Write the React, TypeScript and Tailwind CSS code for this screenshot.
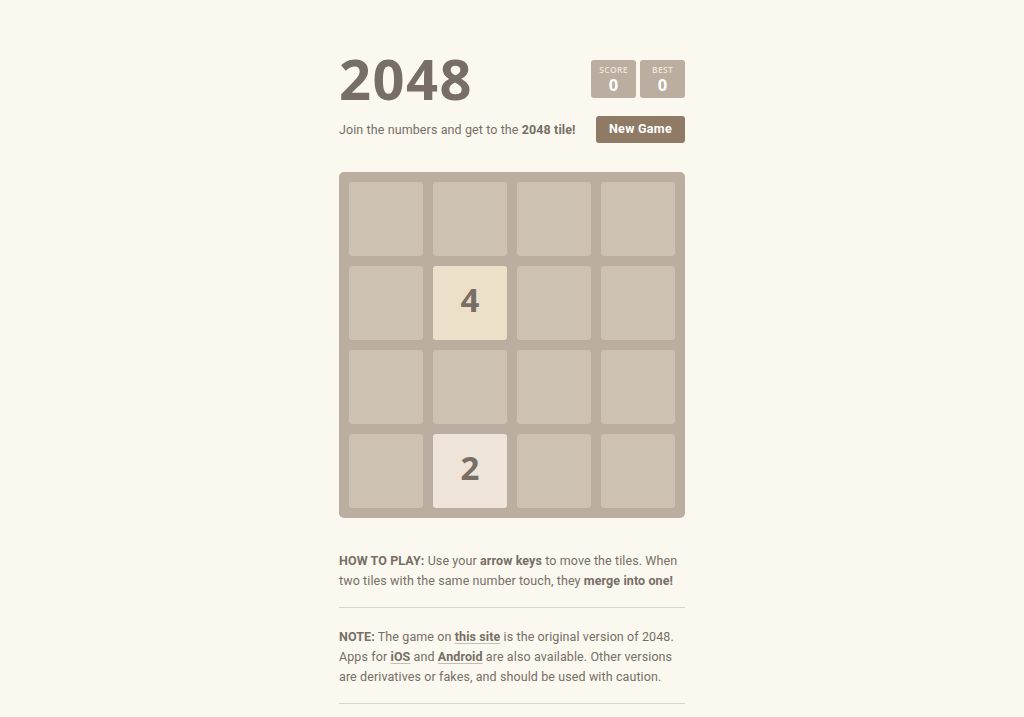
import React from "react";

const grid: (number | null)[][] = [
  [null, null, null, null],
  [null, 4, null, null],
  [null, null, null, null],
  [null, 2, null, null],
];

function Tile({ v }: { v: number | null }) {
  if (v === 2)
    return (
      <div className="w-[74px] h-[74px] rounded-[3px] bg-[#eee4da] flex items-center justify-center pb-[6px] text-[33px] font-bold text-[#776e65]">
        2
      </div>
    );
  if (v === 4)
    return (
      <div className="w-[74px] h-[74px] rounded-[3px] bg-[#ede0c8] flex items-center justify-center pb-[6px] text-[33px] font-bold text-[#776e65]">
        4
      </div>
    );
  return <div className="w-[74px] h-[74px] rounded-[3px] bg-[#cdc1b4]" />;
}

const link = "font-bold underline decoration-[#c4bdb5] underline-offset-2";

function ScoreBox({ label }: { label: string }) {
  return (
    <div className="w-[45px] h-[38px] rounded-[3px] bg-[#bbada0] flex flex-col items-center pt-[5px]">
      <div className="text-[8.5px] leading-[10px] font-semibold text-[#eee4da] tracking-[0.3px]">{label}</div>
      <div className="mt-[1px] text-[16.5px] leading-[17px] font-bold text-white">0</div>
    </div>
  );
}

export default function App() {
  return (
    <div
      className="min-h-[717px] bg-[#faf8ef] text-[#776e65]"
      style={{ fontFamily: '"Open Sans", "Noto Sans", sans-serif' }}
    >
      <div className="w-[346px] mx-auto pt-[48px]">
        <div className="flex justify-between items-start">
          <h1 className="text-[56px] font-bold leading-[60px] tracking-[1.5px] m-0">2048</h1>
          <div className="flex gap-[4px] mt-[12px]">
            <ScoreBox label="SCORE" />
            <ScoreBox label="BEST" />
          </div>
        </div>
        <div
          className="flex justify-between items-center mt-[8px]"
          style={{ fontFamily: 'Roboto, "Liberation Sans", sans-serif' }}
        >
          <p className="text-[12.5px] leading-[20px] tracking-[0.1px]">
            Join the numbers and get to the <strong>2048 tile!</strong>
          </p>
          <button className="w-[89px] h-[27px] rounded-[3px] bg-[#8f7a66] text-white text-[12.5px] font-bold tracking-[0.3px]">
            New Game
          </button>
        </div>
        <div className="mt-[29px] w-[346px] h-[346px] rounded-[5px] bg-[#bbada0] p-[10px] grid grid-cols-4 gap-[10px]">
          {grid.flat().map((v, i) => (
            <Tile key={i} v={v} />
          ))}
        </div>
        <div style={{ fontFamily: 'Roboto, "Liberation Sans", sans-serif' }}>
          <p className="mt-[33px] text-[12.5px] leading-[20px] tracking-[0.1px] whitespace-nowrap">
            <strong>HOW TO PLAY:</strong> Use your <strong>arrow keys</strong> to move the tiles. When
            <br />
            two tiles with the same number touch, they <strong>merge into one!</strong>
          </p>
          <hr className="mt-[16px] border-0 border-t border-[#d8d4d0]" />
          <p className="mt-[19px] text-[12.5px] leading-[20px] tracking-[0.1px] whitespace-nowrap">
            <strong>NOTE:</strong> The game on <a className={link}>this site</a> is the original version of 2048.
            <br />
            Apps for <a className={link}>iOS</a> and <a className={link}>Android</a> are also available. Other versions
            <br />
            are derivatives or fakes, and should be used with caution.
          </p>
          <hr className="mt-[16px] border-0 border-t border-[#d8d4d0]" />
        </div>
      </div>
    </div>
  );
}
